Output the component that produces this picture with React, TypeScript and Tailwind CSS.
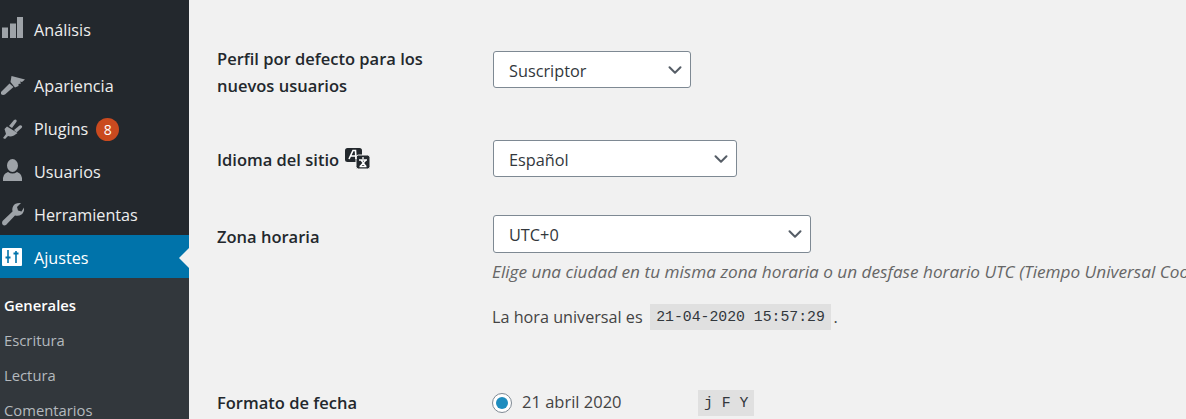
import type { ReactNode } from "react";
import { ChevronDown } from "lucide-react";

const FONT = "[font-family:'Open_Sans','Noto_Sans',sans-serif]";

function BarsIcon() {
  return (
    <svg width="24" height="24" viewBox="0 0 24 24" fill="#9ea3a8">
      <rect x="1" y="10.5" width="6" height="10.5" />
      <rect x="9" y="6.5" width="6" height="14.5" />
      <rect x="16" y="0" width="6" height="21" />
    </svg>
  );
}

function BrushIcon() {
  return (
    <svg width="24" height="24" viewBox="0 0 24 24" fill="#9ea3a8">
      <path d="M0 19 L8.5 10.5 L12.5 14 L4 21.5 Q1.5 22.5 0 21 Z" />
      <path d="M9.5 9 L10.5 3 L24 6.5 L21 9 L19 8.5 L20 10.5 L17.5 11 L17.5 13 L14 14.5 Z" />
    </svg>
  );
}

function PlugIcon() {
  return (
    <svg width="24" height="24" viewBox="0 0 24 24" fill="#9ea3a8">
      <path d="M2 22 L5 18 L3.5 13 L6 10.5 L16.5 17 L13 19.5 Q9.5 21 7 20 L4 23 Z" />
      <path d="M8 10 L13 4 Q14.5 3 15.5 4 Q16 5.5 15 6.5 L11 12 Z" />
      <path d="M13 14 L18.5 9.5 Q20 9 21 10 Q21.5 11 20.5 12 L15.5 16.5 Z" />
    </svg>
  );
}

function UserIcon() {
  return (
    <svg width="24" height="24" viewBox="0 0 24 24" fill="#9ea3a8">
      <ellipse cx="11.5" cy="6.5" rx="5.5" ry="6.5" />
      <path d="M2 22 Q1.5 14.5 7 13 Q11.5 16 16 13 Q21.5 14.5 21 22 Z" />
    </svg>
  );
}

function WrenchIcon() {
  return (
    <svg width="24" height="24" viewBox="0 0 24 24" fill="#9ea3a8">
      <path d="M1.5 19 L11.5 9.5 Q10.5 5 14 2 Q17 0.5 20 1 L16 5 L17 8.5 L20.5 9.5 L23 5.5 Q23.5 10 20.5 12.5 Q17.5 14.5 14 13.5 L5 23 Q3 24 1.5 22.5 Q0.5 21 1.5 19 Z" />
    </svg>
  );
}

function SlidersIcon() {
  return (
    <svg width="20" height="18" viewBox="0 0 20 18" className="ml-[1px]">
      <rect width="20" height="18" rx="1" fill="#fff" />
      <path d="M6 2v13M14 3v12" stroke="#0073aa" strokeWidth="1.6" />
      <path d="M3.5 9.5h5M11.5 5.5h5" stroke="#0073aa" strokeWidth="2" />
    </svg>
  );
}

function TranslateIcon() {
  return (
    <svg width="25" height="21" viewBox="0 0 25 21" className="ml-[6px] -mt-[3px]">
      <rect x="0" y="0" width="17" height="14" rx="2.5" fill="#23282d" />
      <rect x="11" y="7" width="14" height="14" rx="2.5" fill="#23282d" stroke="#f1f1f1" strokeWidth="1" />
      <path d="M4 11 L8 2.5 H10.5 L11 11 M5.5 8 H11" stroke="#fff" strokeWidth="1.6" fill="none" />
      <path d="M18 9v2M14 12h8M16 12l5 6.5M21 12l-6 6.5M14.5 18.5h7" stroke="#fff" strokeWidth="1.3" fill="none" />
    </svg>
  );
}

function MenuItem({ icon, children, current }: { icon: ReactNode; children: ReactNode; current?: boolean }) {
  return (
    <div className={`relative flex h-[43px] items-center pl-[1px] text-[16.2px] text-[#eeeeee] ${current ? "bg-[#0073aa] text-white" : ""}`}>
      <div className="flex w-[33px] shrink-0 items-center justify-start">{icon}</div>
      <div className="flex items-center pt-[4px]">{children}</div>
      {current && (
        <span className="absolute right-0 top-[13px] h-0 w-0 border-y-[10px] border-r-[10px] border-y-transparent border-r-[#f1f1f1]" />
      )}
    </div>
  );
}

function SubItem({ children, active }: { children: ReactNode; active?: boolean }) {
  return (
    <div className={`flex h-[35px] items-center pl-[4px] text-[14.8px] ${active ? "font-semibold text-white" : "text-[#b4b9be]"}`}>
      {children}
    </div>
  );
}

function FakeSelect({ width, children }: { width: string; children: ReactNode }) {
  return (
    <div className={`flex h-[37px] items-center justify-between rounded-[3px] border border-[#7e8993] bg-white pl-[15px] pr-[3px] text-[16.3px] text-[#32373c] ${width}`}>
      <span className="pt-[3px]">{children}</span>
      <ChevronDown size={22} strokeWidth={2.2} className="mr-[1px] text-[#555d66]" />
    </div>
  );
}

function Label({ children }: { children: ReactNode }) {
  return (
    <div className="w-[276px] shrink-0 pr-[40px] text-[16.5px] font-semibold leading-[26.5px] text-[#23282d]">{children}</div>
  );
}

function Code({ children, className }: { children: ReactNode; className: string }) {
  return (
    <span className={`inline-block bg-[#e0e0e0] text-[14.8px] leading-[26px] text-[#32373c] [font-family:'Liberation_Mono',monospace] ${className}`}>
      {children}
    </span>
  );
}

export default function App() {
  return (
    <div className={`flex h-[419px] w-[1186px] overflow-hidden bg-[#f1f1f1] ${FONT}`}>
      <aside className="h-full w-[189px] shrink-0 bg-[#23282d] pt-[7px]">
        <div className="mb-[13px]">
          <MenuItem icon={<BarsIcon />}>Análisis</MenuItem>
        </div>
        <MenuItem icon={<BrushIcon />}>Apariencia</MenuItem>
        <MenuItem icon={<PlugIcon />}>
          Plugins
          <span className="ml-[8px] flex h-[23px] w-[23px] items-center justify-center rounded-full bg-[#ca4a1f] text-[14px] text-white">8</span>
        </MenuItem>
        <MenuItem icon={<UserIcon />}>Usuarios</MenuItem>
        <MenuItem icon={<WrenchIcon />}>Herramientas</MenuItem>
        <MenuItem current icon={<SlidersIcon />}>Ajustes</MenuItem>
        <div className="h-full bg-[#32373c] pt-[10px]">
          <SubItem active>Generales</SubItem>
          <SubItem>Escritura</SubItem>
          <SubItem>Lectura</SubItem>
          <SubItem>Comentarios</SubItem>
        </div>
      </aside>

      <main className="min-w-0 flex-1 overflow-hidden pl-[28px] pt-[46px]">
        <div className="flex h-[53px]">
          <Label>Perfil por defecto para los nuevos usuarios</Label>
          <div className="pt-[5px]">
            <FakeSelect width="w-[198px]">Suscriptor</FakeSelect>
          </div>
        </div>

        <div className="mt-[41px] flex">
          <Label>
            <span className="flex items-center pt-[7px]">
              Idioma del sitio
              <TranslateIcon />
            </span>
          </Label>
          <FakeSelect width="w-[244px]">Español</FakeSelect>
        </div>

        <div className="mt-[38px] flex">
          <Label>
            <span className="block pt-[9px]">Zona horaria</span>
          </Label>
          <div className="-ml-[1px] min-w-0">
            <div className="ml-[1px]">
              <FakeSelect width="w-[318px] h-[38px]">UTC+0</FakeSelect>
            </div>
            <p className="mt-[6px] whitespace-nowrap text-[17.2px] italic text-[#666666]">
              Elige una ciudad en tu misma zona horaria o un desfase horario UTC (Tiempo Universal Coordinado)
            </p>
            <p className="mt-[19px] flex items-center whitespace-nowrap text-[16.2px] text-[#444444]">
              La hora universal es
              <Code className="ml-[7px] mr-[2px] px-[6.5px]">21-04-2020 15:57:29</Code>.
            </p>
          </div>
        </div>

        <div className="mt-[59px] flex">
          <Label>
            <span className="block pt-[1px]">Formato de fecha</span>
          </Label>
          <div className="-ml-[1px] flex items-center">
            <span className="flex h-[20px] w-[20px] items-center justify-center rounded-full border border-[#7e8993] bg-white">
              <span className="h-[12px] w-[12px] rounded-full bg-[#1e8cbe]" />
            </span>
            <span className="ml-[10px] w-[176px] text-[16.5px] text-[#444444]">21 abril 2020</span>
            <Code className="px-[6px]">j F Y</Code>
          </div>
        </div>
      </main>
    </div>
  );
}
